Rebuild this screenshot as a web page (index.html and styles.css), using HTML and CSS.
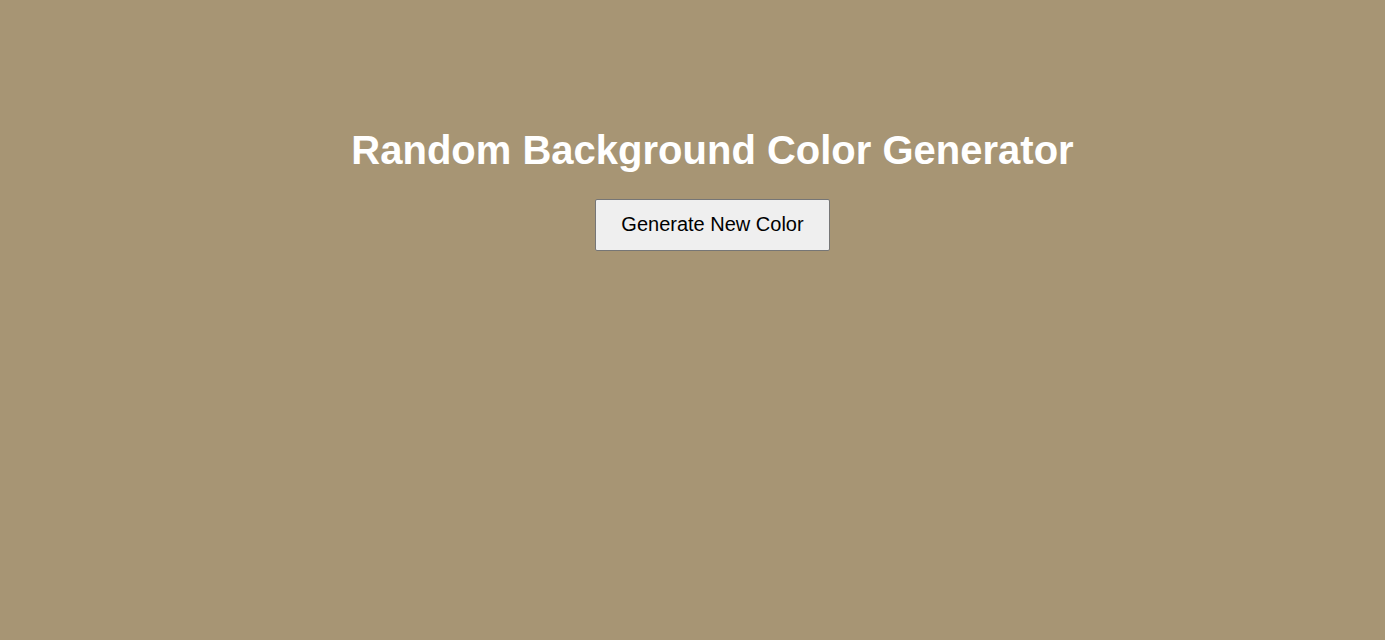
FILE: index.html
```html
<!DOCTYPE html>
<html lang="en">
<head>
<meta charset="utf-8">
<title>Random Background Color Generator</title>
<link rel="stylesheet" href="styles.css">
</head>
<body>
<main class="app">
  <h1 class="title">Random Background Color Generator</h1>
  <button class="generate-btn" type="button">Generate New Color</button>
</main>
</body>
</html>
```
FILE: styles.css
```css
html, body {
  margin: 0;
  padding: 0;
}
body {
  background: #a79574;
  font-family: "Liberation Sans", Arial, sans-serif;
  min-height: 100vh;
}
.app {
  display: flex;
  flex-direction: column;
  align-items: center;
  padding-top: 127px;
  padding-left: 40px;
}
.title {
  margin: 0;
  color: #ffffff;
  font-size: 40px;
  font-weight: bold;
  line-height: 46px;
}
.generate-btn {
  margin-top: 26px;
  width: 235px;
  height: 52px;
  padding: 0 25px 2px;
  font-family: "Liberation Sans", Arial, sans-serif;
  font-size: 20px;
  color: #000;
  background: #efefef;
  border: 1px solid #767676;
  border-radius: 2px;
}
```
